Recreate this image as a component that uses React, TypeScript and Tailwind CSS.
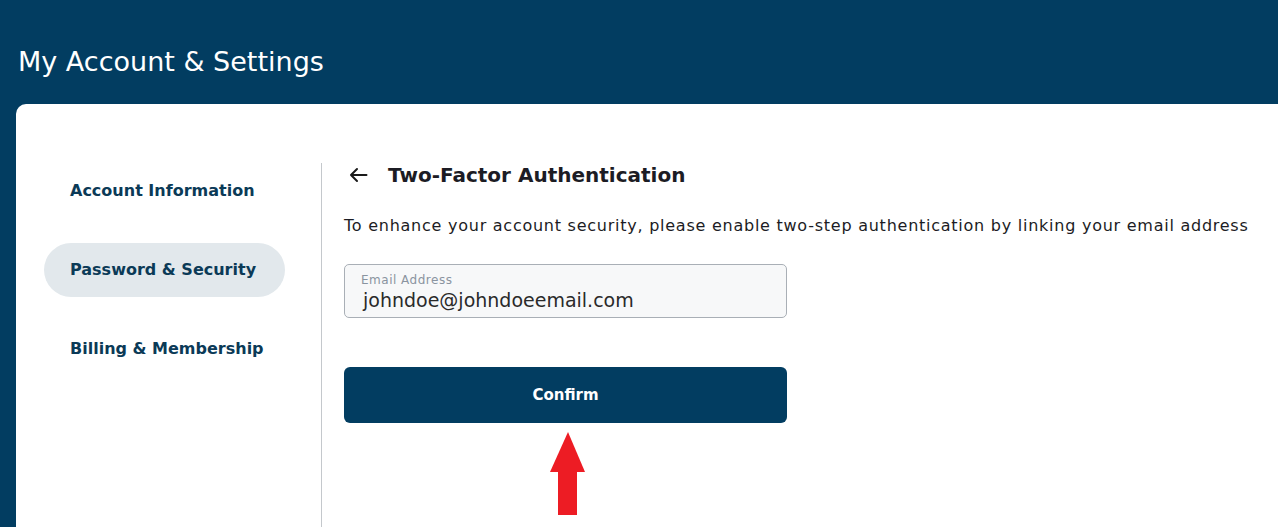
import React from "react";

export default function App() {
  const font = { fontFamily: '"DejaVu Sans", "Open Sans", sans-serif' };
  return (
    <div className="w-[1278px] h-[527px] bg-[#023d61] flex flex-col overflow-hidden" style={font}>
      <div className="h-[104px] flex items-center pl-[18px] pt-[20px] shrink-0">
        <h1 className="text-[27px] text-white font-normal">My Account &amp; Settings</h1>
      </div>
      <div className="flex-1 ml-[16px] bg-white rounded-tl-[10px] flex pt-[59px]">
        <nav className="w-[305px] shrink-0 flex flex-col pl-[28px] pr-[36px] gap-[25px] pt-[1px]">
          <div className="h-[54px] flex items-center pl-[26px] text-[16px] font-semibold text-[#0b3a57]">Account Information</div>
          <div className="h-[54px] flex items-center pl-[26px] text-[16px] font-semibold text-[#0b3a57] bg-[#e2e8ec] rounded-full">Password &amp; Security</div>
          <div className="h-[54px] flex items-center pl-[26px] text-[16px] font-semibold text-[#0b3a57]">Billing &amp; Membership</div>
        </nav>
        <div className="w-px bg-[#c4c8cc] shrink-0" />
        <main className="pl-[22px] flex flex-col">
          <div className="flex items-center gap-[20px] h-[26px] mt-[-1px] pl-[5px]">
            <svg width="19" height="16" viewBox="0 0 19 16" fill="none" stroke="#1a1a1a" strokeWidth="2" strokeLinecap="round" strokeLinejoin="round">
              <path d="M17.5 8H2M8 2L2 8l6 6" />
            </svg>
            <h2 className="text-[20px] font-semibold text-[#1c1c24]">Two-Factor Authentication</h2>
          </div>
          <p className="mt-[26px] text-[16px] tracking-[0.75px] text-[#1c1c24] whitespace-nowrap">To enhance your account security, please enable two-step authentication by linking your email address</p>
          <div className="mt-[26px] w-[443px] h-[54px] border border-[#a9afb6] rounded-[5px] bg-[#f7f8f9] flex flex-col justify-center pl-[16px] pt-[4px]">
            <span className="text-[12px] tracking-[0.5px] text-[#8a94a0] leading-[14px]">Email Address</span>
            <span className="text-[19px] text-[#2a2a2a] leading-[26px] pl-[2px]">johndoe@johndoeemail.com</span>
          </div>
          <button className="mt-[49px] w-[443px] h-[56px] bg-[#023d61] rounded-[6px] text-white text-[15px] font-bold">Confirm</button>
          <div className="relative">
            <svg className="absolute left-[206px] top-[9px]" width="36" height="84" viewBox="0 0 36 84">
              <polygon points="18,0 35,40 0,40" fill="#ed1c24" />
              <rect x="8" y="39" width="19" height="44" fill="#ed1c24" />
            </svg>
          </div>
        </main>
      </div>
    </div>
  );
}
